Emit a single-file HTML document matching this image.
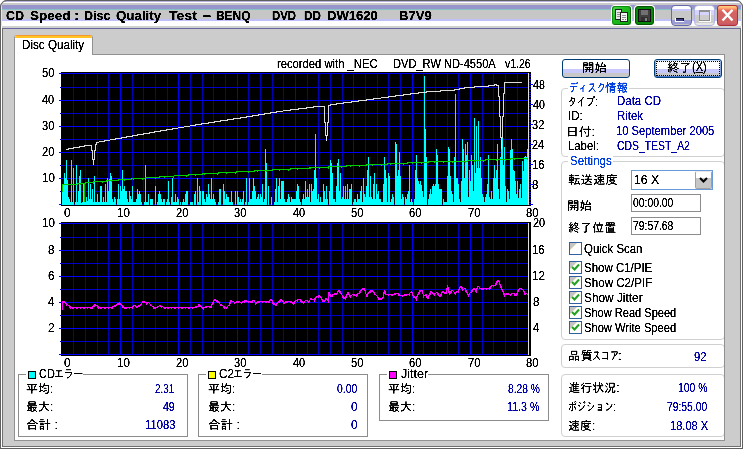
<!DOCTYPE html>
<html lang="ja"><head><meta charset="utf-8"><title>CD Speed : Disc Quality Test</title>
<style>
html,body{margin:0;padding:0;background:#fff;}
body{width:743px;height:449px;overflow:hidden;position:relative;font-family:'Liberation Sans','IPAGothic','Noto Sans CJK JP',sans-serif;font-size:12px;}
#win{position:absolute;left:0;top:0;width:743px;height:449px;background:#cccccc;border-radius:7px 7px 0 0;overflow:hidden;}
#win div,#win span,#win svg{position:absolute;box-sizing:border-box;}
#tb{left:0;top:0;width:743px;height:29px;background:linear-gradient(to bottom,#6a6a6a 0,#6a6a6a 1px,#b4b4dc 1px,#b4b4dc 2px,#fff 2px,#fff 3px,#cacaca 3px,#cacaca 5px,#9696cc 5px,#9696cc 9px,#84c4c4 9px,#84c4c4 10px,#c6c6c6 10px,#c6c6c6 19px,#c0c0f8 19px,#c0c0f8 21px,#fff 21px,#fff 26px,#d0d0d0 26px,#d0d0d0 28px,#6868a0 28px,#6868a0 29px);}
.fr{background:#686868;}
.t{white-space:nowrap;line-height:14px;height:14px;transform-origin:0 50%;color:#000;}
.b{font-weight:bold;}
#panel{left:14px;top:54px;width:711px;height:387px;background:#fff;border:1px solid #919191;}
#tab{left:14px;top:35px;width:79px;height:20px;background:#fff;border-left:1px solid #919191;border-right:1px solid #919191;border-radius:3px 3px 0 0;overflow:hidden;}
#tab i{position:absolute;left:-1px;top:0;width:79px;height:3px;background:linear-gradient(to bottom,#f8982c 0,#f8982c 1px,#ffc423 1px,#ffc423 3px);}
.gb{border:1px solid #8c8c8c;}
.gr{border:1px solid #d0d0d0;border-radius:4px;}
.cap{background:#fff;}
.sw{border:1px solid #000;width:8px;height:8px;}
.btn{border:1px solid #003c74;border-radius:3px;background:linear-gradient(to bottom,#fff 0,#fff 9px,#c8c8fc 9px,#c8c8fc 13px,#c8c8c8 13px,#c8c8c8 17px);}
.inp{border:1px solid #8c8c8c;background:#fff;}
.cb{width:13px;height:13px;border:1px solid #3060a0;background:linear-gradient(135deg,#c4c4c4 0,#c4c4c4 30%,#ffffc8 33%,#fff 38%);}
.cb svg{left:0;top:0;}
#edge{left:0;top:0;width:743px;height:449px;border:1px solid #606060;border-bottom:0;border-radius:7px 7px 0 0;}
#win span.w{position:relative;display:inline-block;white-space:pre;transform-origin:0 50%;line-height:14px;height:14px;vertical-align:top;}

</style></head>
<body>
<div id="win">
<div id="tb"></div>
<!-- frame -->
<div class="fr" style="left:0;top:0;width:1px;height:449px;background:#606060"></div>
<div class="fr" style="left:1px;top:4px;width:1px;height:22px;background:#e4e4e4"></div>
<div class="fr" style="left:741px;top:4px;width:1px;height:22px;background:#e4e4e4"></div>
<div class="fr" style="left:1px;top:26px;width:1px;height:422px;background:#fff"></div>
<div class="fr" style="left:2px;top:28px;width:1px;height:419px;background:#707070"></div>
<div class="fr" style="left:742px;top:0;width:1px;height:449px;background:#606060"></div>
<div class="fr" style="left:741px;top:26px;width:1px;height:422px;background:#fff"></div>
<div class="fr" style="left:740px;top:28px;width:1px;height:419px;background:#707070"></div>
<div class="fr" style="left:2px;top:446px;width:739px;height:1px;background:#707070"></div>
<div class="fr" style="left:1px;top:447px;width:741px;height:1px;background:#fff"></div>
<div class="fr" style="left:0;top:448px;width:743px;height:1px;background:#606060"></div>

<div id="edge"></div>
<!-- title buttons -->
<div id="g1" style="left:612px;top:6px;width:19px;height:19px;border-radius:3px;background:linear-gradient(135deg,#58d058 0,#20bc20 35%,#10a810 100%);border:1px solid #0a900a;border-bottom-color:#067006;border-right-color:#067006;box-shadow:0 0 0 1px #fff;">
<svg width="17" height="17" viewBox="0 0 17 17" shape-rendering="crispEdges"><rect x="2.5" y="2.5" width="6" height="10" fill="#e8e8e8" stroke="#202020"/><rect x="4" y="5" width="3" height="1" fill="#909090"/><rect x="4" y="7" width="3" height="1" fill="#909090"/><rect x="4" y="9" width="3" height="1" fill="#909090"/><rect x="7.5" y="5.5" width="7" height="9" fill="#f4f4f4" stroke="#202020"/><rect x="9" y="8" width="4" height="1" fill="#909090"/><rect x="9" y="10" width="4" height="1" fill="#909090"/><rect x="9" y="12" width="2" height="1" fill="#909090"/><rect x="12" y="12" width="1" height="1" fill="#b040b0"/></svg>
</div>
<div id="g2" style="left:635px;top:6px;width:19px;height:19px;border-radius:3px;background:#088808;border:1px solid #045404;box-shadow:0 0 0 1px #fff;">
<svg width="17" height="17" viewBox="0 0 17 17" shape-rendering="crispEdges"><rect x="2.5" y="2.5" width="12" height="12" fill="#404040" stroke="#101010"/><rect x="5" y="3" width="7" height="5" fill="#707070"/><rect x="5" y="10" width="7" height="4" fill="#303030"/><rect x="9" y="11" width="2" height="3" fill="#808080"/></svg>
</div>
<div id="bmin" style="left:671px;top:5px;width:21px;height:21px;border-radius:4px;border:1px solid #6868b0;background:linear-gradient(to bottom,#fff 0,#fff 3px,#c8c8fc 3px,#c8c8fc 5px,#c8c8c8 5px,#c8c8c8 14px,#9c9cd4 14px,#9c9cd4 18px,#c0c0c0 18px);">
<div style="left:3px;top:12px;width:9px;height:4px;background:#fff"></div>
<div style="left:4px;top:12px;width:8px;height:3px;background:#404088;border-top:1px solid #101020;border-right:1px solid #101020"></div>
</div>
<div id="bmax" style="left:694px;top:5px;width:21px;height:21px;border-radius:4px;border:1px solid #b4b4e4;background:linear-gradient(to bottom,#fff 0,#fff 4px,#d4d4fc 4px,#d4d4fc 9px,#cccccc 9px,#cccccc 17px,#e8e8e8 17px);">
<div style="left:4px;top:5px;width:12px;height:11px;border:1px solid #fff;"></div>
<div style="left:4px;top:4px;width:11px;height:11px;border:1px solid #909090;border-top-width:2px;"></div>
</div>
<div id="bcls" style="left:717px;top:5px;width:21px;height:21px;border-radius:3px;border:1px solid #b03030;background:linear-gradient(to bottom,#ffd080 0,#ffb070 2px,#f07060 4px,#d46464 6px,#d06060 17px,#c05070 19px);">
<svg width="19" height="19" viewBox="0 0 19 19"><path d="M5.3 4.6 L13.7 13.6 M13.7 4.6 L5.3 13.6" stroke="#fff" stroke-width="2.3" stroke-linecap="square"/></svg>
</div>

<!-- tab control -->
<div id="panel"></div>
<div id="tab"><i></i></div>

<!-- bottom group boxes -->
<div class="gb" style="left:18px;top:374px;width:170px;height:63px"></div>
<div class="cap" style="left:26px;top:370px;width:57px;height:10px"></div>
<div class="sw" style="left:28px;top:371px;background:#00ffff"></div>
<div class="gb" style="left:198px;top:374px;width:170px;height:63px"></div>
<div class="cap" style="left:206px;top:370px;width:56px;height:10px"></div>
<div class="sw" style="left:208px;top:371px;background:#ffff00"></div>
<div class="gb" style="left:379px;top:374px;width:170px;height:47px"></div>
<div class="cap" style="left:387px;top:370px;width:41px;height:10px"></div>
<div class="sw" style="left:389px;top:371px;background:#ff00ff"></div>

<!-- right column -->
<div class="btn" style="left:562px;top:59px;width:68px;height:19px"></div>
<div class="btn" style="left:654px;top:59px;width:68px;height:19px;box-shadow:inset 0 -1px 0 #4878d0,inset 0 1px 0 #c4d8f8,inset 1px 0 0 #88a8e0,inset -1px 0 0 #88a8e0"><div style="left:1px;top:1px;width:64px;height:15px;border:1px dotted #000"></div></div>
<div class="gr" style="left:561px;top:88px;width:164px;height:69px"></div>
<div class="cap" style="left:568px;top:83px;width:61px;height:10px"></div>
<div class="gr" style="left:561px;top:161px;width:164px;height:179px"></div>
<div class="cap" style="left:568px;top:156px;width:45px;height:10px"></div>
<div class="gr" style="left:561px;top:344px;width:164px;height:24px"></div>
<div class="gr" style="left:561px;top:374px;width:164px;height:63px"></div>
<div style="left:724px;top:54px;width:1px;height:387px;background:#919191"></div>

<div class="inp" style="left:631px;top:170px;width:82px;height:20px;border-color:#6a9ad8"></div>
<div style="left:695px;top:171px;width:17px;height:18px;border:1px solid #a0a0a0;border-top-color:#e8e8e8;border-radius:2px;background:linear-gradient(to bottom,#fff 0,#fff 6px,#c6c6c6 6px)">
<svg width="15" height="16" viewBox="0 0 15 16"><path d="M4 6 L7.5 9.5 L11 6" fill="none" stroke="#000" stroke-width="2"/></svg>
</div>
<div class="inp" style="left:631px;top:194px;width:70px;height:18px"></div>
<div class="inp" style="left:631px;top:217px;width:70px;height:18px"></div>

<div class="cb" style="left:569px;top:242px"></div>
<div class="cb" style="left:569px;top:261px"><svg width="11" height="11" viewBox="0 0 11 11"><path d="M2 5 L4.5 7.5 L9 2.5" fill="none" stroke="#21a121" stroke-width="2"/></svg></div>
<div class="cb" style="left:569px;top:276px"><svg width="11" height="11" viewBox="0 0 11 11"><path d="M2 5 L4.5 7.5 L9 2.5" fill="none" stroke="#21a121" stroke-width="2"/></svg></div>
<div class="cb" style="left:569px;top:291px"><svg width="11" height="11" viewBox="0 0 11 11"><path d="M2 5 L4.5 7.5 L9 2.5" fill="none" stroke="#21a121" stroke-width="2"/></svg></div>
<div class="cb" style="left:569px;top:306px"><svg width="11" height="11" viewBox="0 0 11 11"><path d="M2 5 L4.5 7.5 L9 2.5" fill="none" stroke="#21a121" stroke-width="2"/></svg></div>
<div class="cb" style="left:569px;top:321px"><svg width="11" height="11" viewBox="0 0 11 11"><path d="M2 5 L4.5 7.5 L9 2.5" fill="none" stroke="#21a121" stroke-width="2"/></svg></div>

<svg id="charts" width="743" height="449" viewBox="0 0 743 449" shape-rendering="crispEdges" style="position:absolute;left:0;top:0">
<rect x="61" y="72" width="470" height="134" fill="#000"/>
<rect x="73" y="73" width="1" height="132" fill="#0000b4"/>
<rect x="85" y="73" width="1" height="132" fill="#0000b4"/>
<rect x="97" y="73" width="1" height="132" fill="#0000b4"/>
<rect x="108" y="73" width="1" height="132" fill="#0000b4"/>
<rect x="120" y="73" width="1" height="132" fill="#0000f0"/>
<rect x="132" y="73" width="1" height="132" fill="#0000b4"/>
<rect x="143" y="73" width="1" height="132" fill="#0000b4"/>
<rect x="155" y="73" width="1" height="132" fill="#0000b4"/>
<rect x="167" y="73" width="1" height="132" fill="#0000b4"/>
<rect x="178" y="73" width="1" height="132" fill="#0000f0"/>
<rect x="190" y="73" width="1" height="132" fill="#0000b4"/>
<rect x="202" y="73" width="1" height="132" fill="#0000b4"/>
<rect x="213" y="73" width="1" height="132" fill="#0000b4"/>
<rect x="225" y="73" width="1" height="132" fill="#0000b4"/>
<rect x="237" y="73" width="1" height="132" fill="#0000f0"/>
<rect x="248" y="73" width="1" height="132" fill="#0000b4"/>
<rect x="260" y="73" width="1" height="132" fill="#0000b4"/>
<rect x="272" y="73" width="1" height="132" fill="#0000b4"/>
<rect x="283" y="73" width="1" height="132" fill="#0000b4"/>
<rect x="295" y="73" width="1" height="132" fill="#0000f0"/>
<rect x="307" y="73" width="1" height="132" fill="#0000b4"/>
<rect x="318" y="73" width="1" height="132" fill="#0000b4"/>
<rect x="330" y="73" width="1" height="132" fill="#0000b4"/>
<rect x="342" y="73" width="1" height="132" fill="#0000b4"/>
<rect x="353" y="73" width="1" height="132" fill="#0000f0"/>
<rect x="365" y="73" width="1" height="132" fill="#0000b4"/>
<rect x="377" y="73" width="1" height="132" fill="#0000b4"/>
<rect x="388" y="73" width="1" height="132" fill="#0000b4"/>
<rect x="400" y="73" width="1" height="132" fill="#0000b4"/>
<rect x="412" y="73" width="1" height="132" fill="#0000f0"/>
<rect x="423" y="73" width="1" height="132" fill="#0000b4"/>
<rect x="435" y="73" width="1" height="132" fill="#0000b4"/>
<rect x="447" y="73" width="1" height="132" fill="#0000b4"/>
<rect x="458" y="73" width="1" height="132" fill="#0000b4"/>
<rect x="470" y="73" width="1" height="132" fill="#0000f0"/>
<rect x="482" y="73" width="1" height="132" fill="#0000b4"/>
<rect x="493" y="73" width="1" height="132" fill="#0000b4"/>
<rect x="505" y="73" width="1" height="132" fill="#0000b4"/>
<rect x="517" y="73" width="1" height="132" fill="#0000b4"/>
<rect x="59" y="73" width="469" height="1" fill="#0000ff"/>
<rect x="60" y="87" width="468" height="1" fill="#0000c8"/>
<rect x="59" y="100" width="469" height="1" fill="#0000ff"/>
<rect x="60" y="113" width="468" height="1" fill="#0000c8"/>
<rect x="59" y="126" width="469" height="1" fill="#0000ff"/>
<rect x="60" y="139" width="468" height="1" fill="#0000c8"/>
<rect x="59" y="152" width="469" height="1" fill="#0000ff"/>
<rect x="60" y="165" width="468" height="1" fill="#0000c8"/>
<rect x="59" y="178" width="469" height="1" fill="#0000ff"/>
<rect x="60" y="191" width="468" height="1" fill="#0000c8"/>
<rect x="59" y="204" width="469" height="1" fill="#0000ff"/>
<rect x="61" y="222" width="470" height="134" fill="#000"/>
<rect x="73" y="223" width="1" height="132" fill="#0000b4"/>
<rect x="85" y="223" width="1" height="132" fill="#0000b4"/>
<rect x="97" y="223" width="1" height="132" fill="#0000b4"/>
<rect x="108" y="223" width="1" height="132" fill="#0000b4"/>
<rect x="120" y="223" width="1" height="132" fill="#0000f0"/>
<rect x="132" y="223" width="1" height="132" fill="#0000b4"/>
<rect x="143" y="223" width="1" height="132" fill="#0000b4"/>
<rect x="155" y="223" width="1" height="132" fill="#0000b4"/>
<rect x="167" y="223" width="1" height="132" fill="#0000b4"/>
<rect x="178" y="223" width="1" height="132" fill="#0000f0"/>
<rect x="190" y="223" width="1" height="132" fill="#0000b4"/>
<rect x="202" y="223" width="1" height="132" fill="#0000b4"/>
<rect x="213" y="223" width="1" height="132" fill="#0000b4"/>
<rect x="225" y="223" width="1" height="132" fill="#0000b4"/>
<rect x="237" y="223" width="1" height="132" fill="#0000f0"/>
<rect x="248" y="223" width="1" height="132" fill="#0000b4"/>
<rect x="260" y="223" width="1" height="132" fill="#0000b4"/>
<rect x="272" y="223" width="1" height="132" fill="#0000b4"/>
<rect x="283" y="223" width="1" height="132" fill="#0000b4"/>
<rect x="295" y="223" width="1" height="132" fill="#0000f0"/>
<rect x="307" y="223" width="1" height="132" fill="#0000b4"/>
<rect x="318" y="223" width="1" height="132" fill="#0000b4"/>
<rect x="330" y="223" width="1" height="132" fill="#0000b4"/>
<rect x="342" y="223" width="1" height="132" fill="#0000b4"/>
<rect x="353" y="223" width="1" height="132" fill="#0000f0"/>
<rect x="365" y="223" width="1" height="132" fill="#0000b4"/>
<rect x="377" y="223" width="1" height="132" fill="#0000b4"/>
<rect x="388" y="223" width="1" height="132" fill="#0000b4"/>
<rect x="400" y="223" width="1" height="132" fill="#0000b4"/>
<rect x="412" y="223" width="1" height="132" fill="#0000f0"/>
<rect x="423" y="223" width="1" height="132" fill="#0000b4"/>
<rect x="435" y="223" width="1" height="132" fill="#0000b4"/>
<rect x="447" y="223" width="1" height="132" fill="#0000b4"/>
<rect x="458" y="223" width="1" height="132" fill="#0000b4"/>
<rect x="470" y="223" width="1" height="132" fill="#0000f0"/>
<rect x="482" y="223" width="1" height="132" fill="#0000b4"/>
<rect x="493" y="223" width="1" height="132" fill="#0000b4"/>
<rect x="505" y="223" width="1" height="132" fill="#0000b4"/>
<rect x="517" y="223" width="1" height="132" fill="#0000b4"/>
<rect x="59" y="223" width="469" height="1" fill="#0000ff"/>
<rect x="60" y="237" width="468" height="1" fill="#0000c8"/>
<rect x="59" y="250" width="469" height="1" fill="#0000ff"/>
<rect x="60" y="263" width="468" height="1" fill="#0000c8"/>
<rect x="59" y="276" width="469" height="1" fill="#0000ff"/>
<rect x="60" y="289" width="468" height="1" fill="#0000c8"/>
<rect x="59" y="302" width="469" height="1" fill="#0000ff"/>
<rect x="60" y="315" width="468" height="1" fill="#0000c8"/>
<rect x="59" y="328" width="469" height="1" fill="#0000ff"/>
<rect x="60" y="341" width="468" height="1" fill="#0000c8"/>
<rect x="59" y="354" width="469" height="1" fill="#0000ff"/>
<rect x="529" y="204" width="2" height="1" fill="#0000ff"/>
<rect x="529" y="202" width="2" height="1" fill="#0000ff"/>
<rect x="529" y="199" width="2" height="1" fill="#0000ff"/>
<rect x="529" y="196" width="2" height="1" fill="#0000ff"/>
<rect x="529" y="194" width="2" height="1" fill="#0000ff"/>
<rect x="529" y="192" width="2" height="1" fill="#0000ff"/>
<rect x="529" y="189" width="2" height="1" fill="#0000ff"/>
<rect x="529" y="186" width="2" height="1" fill="#0000ff"/>
<rect x="529" y="184" width="4" height="1" fill="#0000ff"/>
<rect x="529" y="182" width="2" height="1" fill="#0000ff"/>
<rect x="529" y="179" width="2" height="1" fill="#0000ff"/>
<rect x="529" y="176" width="2" height="1" fill="#0000ff"/>
<rect x="529" y="174" width="2" height="1" fill="#0000ff"/>
<rect x="529" y="172" width="2" height="1" fill="#0000ff"/>
<rect x="529" y="169" width="2" height="1" fill="#0000ff"/>
<rect x="529" y="166" width="2" height="1" fill="#0000ff"/>
<rect x="529" y="164" width="4" height="1" fill="#0000ff"/>
<rect x="529" y="162" width="2" height="1" fill="#0000ff"/>
<rect x="529" y="159" width="2" height="1" fill="#0000ff"/>
<rect x="529" y="156" width="2" height="1" fill="#0000ff"/>
<rect x="529" y="154" width="2" height="1" fill="#0000ff"/>
<rect x="529" y="152" width="2" height="1" fill="#0000ff"/>
<rect x="529" y="149" width="2" height="1" fill="#0000ff"/>
<rect x="529" y="146" width="2" height="1" fill="#0000ff"/>
<rect x="529" y="144" width="4" height="1" fill="#0000ff"/>
<rect x="529" y="142" width="2" height="1" fill="#0000ff"/>
<rect x="529" y="139" width="2" height="1" fill="#0000ff"/>
<rect x="529" y="136" width="2" height="1" fill="#0000ff"/>
<rect x="529" y="134" width="2" height="1" fill="#0000ff"/>
<rect x="529" y="132" width="2" height="1" fill="#0000ff"/>
<rect x="529" y="129" width="2" height="1" fill="#0000ff"/>
<rect x="529" y="126" width="2" height="1" fill="#0000ff"/>
<rect x="529" y="124" width="4" height="1" fill="#0000ff"/>
<rect x="529" y="122" width="2" height="1" fill="#0000ff"/>
<rect x="529" y="119" width="2" height="1" fill="#0000ff"/>
<rect x="529" y="116" width="2" height="1" fill="#0000ff"/>
<rect x="529" y="114" width="2" height="1" fill="#0000ff"/>
<rect x="529" y="112" width="2" height="1" fill="#0000ff"/>
<rect x="529" y="109" width="2" height="1" fill="#0000ff"/>
<rect x="529" y="106" width="2" height="1" fill="#0000ff"/>
<rect x="529" y="104" width="4" height="1" fill="#0000ff"/>
<rect x="529" y="102" width="2" height="1" fill="#0000ff"/>
<rect x="529" y="99" width="2" height="1" fill="#0000ff"/>
<rect x="529" y="96" width="2" height="1" fill="#0000ff"/>
<rect x="529" y="94" width="2" height="1" fill="#0000ff"/>
<rect x="529" y="92" width="2" height="1" fill="#0000ff"/>
<rect x="529" y="89" width="2" height="1" fill="#0000ff"/>
<rect x="529" y="86" width="2" height="1" fill="#0000ff"/>
<rect x="529" y="84" width="4" height="1" fill="#0000ff"/>
<rect x="529" y="82" width="2" height="1" fill="#0000ff"/>
<rect x="529" y="79" width="2" height="1" fill="#0000ff"/>
<rect x="529" y="76" width="2" height="1" fill="#0000ff"/>
<rect x="529" y="74" width="2" height="1" fill="#0000ff"/>
<rect x="529" y="204" width="4" height="1" fill="#0000ff"/>
<path d="M62 185h1v20h-1zM63 185h1v20h-1zM64 173h1v32h-1zM65 178h1v27h-1zM66 160h1v45h-1zM67 180h1v25h-1zM68 197h1v8h-1zM69 199h1v6h-1zM70 202h1v3h-1zM71 160h1v45h-1zM72 202h1v3h-1zM73 168h1v37h-1zM75 202h1v3h-1zM76 165h1v40h-1zM77 202h1v3h-1zM78 191h1v14h-1zM79 176h1v29h-1zM80 170h1v35h-1zM81 203h1v2h-1zM82 202h1v3h-1zM83 184h1v21h-1zM84 201h1v4h-1zM85 202h1v3h-1zM86 197h1v8h-1zM87 201h1v4h-1zM88 178h1v27h-1zM89 199h1v6h-1zM90 184h1v21h-1zM91 199h1v6h-1zM92 189h1v16h-1zM93 202h1v3h-1zM94 176h1v29h-1zM95 202h1v3h-1zM96 202h1v3h-1zM97 194h1v11h-1zM98 202h1v3h-1zM99 202h1v3h-1zM100 186h1v19h-1zM101 186h1v19h-1zM102 202h1v3h-1zM103 197h1v8h-1zM104 202h1v3h-1zM105 184h1v21h-1zM106 202h1v3h-1zM107 178h1v27h-1zM108 191h1v14h-1zM109 179h1v26h-1zM110 173h1v32h-1zM111 176h1v29h-1zM112 199h1v6h-1zM113 202h1v3h-1zM114 197h1v8h-1zM115 199h1v6h-1zM117 199h1v6h-1zM118 184h1v21h-1zM119 199h1v6h-1zM120 186h1v19h-1zM121 191h1v14h-1zM122 170h1v35h-1zM123 189h1v16h-1zM124 186h1v19h-1zM125 191h1v14h-1zM126 191h1v14h-1zM127 199h1v6h-1zM128 202h1v3h-1zM129 191h1v14h-1zM130 196h1v9h-1zM131 199h1v6h-1zM132 186h1v19h-1zM133 202h1v3h-1zM134 202h1v3h-1zM135 202h1v3h-1zM136 199h1v6h-1zM137 189h1v16h-1zM138 194h1v11h-1zM139 191h1v14h-1zM140 194h1v11h-1zM141 202h1v3h-1zM144 202h1v3h-1zM145 165h1v40h-1zM146 202h1v3h-1zM147 202h1v3h-1zM148 194h1v11h-1zM150 199h1v6h-1zM151 199h1v6h-1zM152 199h1v6h-1zM155 186h1v19h-1zM157 202h1v3h-1zM158 194h1v11h-1zM159 191h1v14h-1zM160 194h1v11h-1zM161 199h1v6h-1zM162 202h1v3h-1zM163 199h1v6h-1zM164 199h1v6h-1zM166 202h1v3h-1zM167 199h1v6h-1zM168 181h1v24h-1zM169 202h1v3h-1zM171 197h1v8h-1zM172 178h1v27h-1zM173 202h1v3h-1zM174 202h1v3h-1zM175 194h1v11h-1zM176 202h1v3h-1zM177 197h1v8h-1zM178 199h1v6h-1zM180 202h1v3h-1zM182 202h1v3h-1zM183 199h1v6h-1zM184 202h1v3h-1zM185 194h1v11h-1zM186 191h1v14h-1zM187 191h1v14h-1zM190 202h1v3h-1zM191 202h1v3h-1zM192 202h1v3h-1zM194 194h1v11h-1zM195 191h1v14h-1zM197 178h1v27h-1zM198 202h1v3h-1zM199 186h1v19h-1zM200 191h1v14h-1zM202 191h1v14h-1zM203 191h1v14h-1zM204 199h1v6h-1zM205 202h1v3h-1zM206 194h1v11h-1zM207 197h1v8h-1zM208 184h1v21h-1zM209 194h1v11h-1zM210 199h1v6h-1zM211 178h1v27h-1zM212 199h1v6h-1zM213 194h1v11h-1zM214 199h1v6h-1zM215 202h1v3h-1zM218 202h1v3h-1zM219 189h1v16h-1zM220 189h1v16h-1zM223 184h1v21h-1zM224 191h1v14h-1zM225 199h1v6h-1zM226 194h1v11h-1zM227 197h1v8h-1zM228 197h1v8h-1zM229 202h1v3h-1zM230 202h1v3h-1zM231 191h1v14h-1zM232 202h1v3h-1zM235 191h1v14h-1zM237 191h1v14h-1zM238 197h1v8h-1zM239 202h1v3h-1zM240 199h1v6h-1zM241 202h1v3h-1zM242 199h1v6h-1zM243 191h1v14h-1zM245 202h1v3h-1zM246 178h1v27h-1zM248 202h1v3h-1zM249 178h1v27h-1zM250 199h1v6h-1zM251 199h1v6h-1zM252 191h1v14h-1zM253 178h1v27h-1zM254 186h1v19h-1zM255 191h1v14h-1zM256 199h1v6h-1zM257 197h1v8h-1zM258 194h1v11h-1zM259 199h1v6h-1zM260 194h1v11h-1zM261 197h1v8h-1zM262 184h1v21h-1zM263 202h1v3h-1zM264 199h1v6h-1zM265 149h1v56h-1zM266 163h1v42h-1zM268 186h1v19h-1zM271 197h1v8h-1zM274 202h1v3h-1zM275 189h1v16h-1zM276 178h1v27h-1zM277 202h1v3h-1zM278 186h1v19h-1zM279 178h1v27h-1zM280 199h1v6h-1zM281 181h1v24h-1zM282 181h1v24h-1zM283 181h1v24h-1zM284 199h1v6h-1zM285 202h1v3h-1zM286 202h1v3h-1zM287 199h1v6h-1zM288 194h1v11h-1zM289 197h1v8h-1zM290 202h1v3h-1zM291 197h1v8h-1zM292 199h1v6h-1zM293 199h1v6h-1zM294 199h1v6h-1zM295 199h1v6h-1zM296 191h1v14h-1zM297 184h1v21h-1zM298 186h1v19h-1zM299 199h1v6h-1zM300 202h1v3h-1zM302 199h1v6h-1zM303 194h1v11h-1zM304 199h1v6h-1zM305 181h1v24h-1zM306 197h1v8h-1zM307 189h1v16h-1zM308 197h1v8h-1zM309 184h1v21h-1zM310 202h1v3h-1zM311 184h1v21h-1zM312 191h1v14h-1zM313 189h1v16h-1zM314 170h1v35h-1zM315 134h1v71h-1zM316 178h1v27h-1zM317 199h1v6h-1zM318 194h1v11h-1zM319 202h1v3h-1zM320 197h1v8h-1zM321 202h1v3h-1zM322 202h1v3h-1zM323 184h1v21h-1zM324 191h1v14h-1zM325 199h1v6h-1zM326 186h1v19h-1zM327 199h1v6h-1zM329 191h1v14h-1zM330 160h1v45h-1zM331 163h1v42h-1zM332 173h1v32h-1zM333 199h1v6h-1zM334 199h1v6h-1zM335 202h1v3h-1zM336 186h1v19h-1zM337 163h1v42h-1zM338 159h1v46h-1zM339 191h1v14h-1zM340 173h1v32h-1zM341 199h1v6h-1zM342 197h1v8h-1zM343 186h1v19h-1zM344 199h1v6h-1zM345 186h1v19h-1zM346 199h1v6h-1zM347 184h1v21h-1zM348 199h1v6h-1zM349 189h1v16h-1zM350 189h1v16h-1zM351 184h1v21h-1zM353 202h1v3h-1zM354 199h1v6h-1zM355 199h1v6h-1zM356 202h1v3h-1zM357 194h1v11h-1zM358 199h1v6h-1zM359 199h1v6h-1zM360 191h1v14h-1zM361 186h1v19h-1zM362 202h1v3h-1zM363 178h1v27h-1zM364 194h1v11h-1zM365 197h1v8h-1zM366 186h1v19h-1zM367 170h1v35h-1zM368 157h1v48h-1zM369 197h1v8h-1zM370 176h1v29h-1zM371 197h1v8h-1zM372 199h1v6h-1zM373 184h1v21h-1zM374 173h1v32h-1zM375 199h1v6h-1zM376 184h1v21h-1zM377 194h1v11h-1zM378 191h1v14h-1zM379 199h1v6h-1zM380 199h1v6h-1zM381 202h1v3h-1zM382 202h1v3h-1zM383 184h1v21h-1zM384 157h1v48h-1zM385 170h1v35h-1zM386 178h1v27h-1zM387 202h1v3h-1zM388 173h1v32h-1zM389 176h1v29h-1zM390 202h1v3h-1zM391 199h1v6h-1zM392 194h1v11h-1zM393 197h1v8h-1zM395 142h1v63h-1zM396 144h1v61h-1zM397 176h1v29h-1zM398 170h1v35h-1zM399 152h1v53h-1zM400 176h1v29h-1zM401 199h1v6h-1zM402 194h1v11h-1zM403 197h1v8h-1zM405 197h1v8h-1zM406 199h1v6h-1zM407 194h1v11h-1zM408 191h1v14h-1zM409 165h1v40h-1zM410 202h1v3h-1zM411 199h1v6h-1zM412 202h1v3h-1zM414 199h1v6h-1zM415 170h1v35h-1zM416 155h1v50h-1zM417 178h1v27h-1zM418 181h1v24h-1zM419 184h1v21h-1zM420 181h1v24h-1zM421 185h1v20h-1zM422 191h1v14h-1zM423 197h1v8h-1zM424 76h1v129h-1zM425 129h1v76h-1zM426 157h1v48h-1zM428 199h1v6h-1zM429 194h1v11h-1zM430 189h1v16h-1zM431 194h1v11h-1zM432 186h1v19h-1zM433 184h1v21h-1zM434 186h1v19h-1zM435 184h1v21h-1zM436 149h1v56h-1zM437 155h1v50h-1zM438 184h1v21h-1zM439 189h1v16h-1zM440 189h1v16h-1zM441 189h1v16h-1zM443 199h1v6h-1zM444 202h1v3h-1zM445 202h1v3h-1zM446 202h1v3h-1zM447 176h1v29h-1zM448 147h1v58h-1zM449 149h1v56h-1zM450 176h1v29h-1zM451 191h1v14h-1zM452 194h1v11h-1zM453 202h1v3h-1zM454 157h1v48h-1zM455 94h1v111h-1zM456 178h1v27h-1zM457 178h1v27h-1zM458 184h1v21h-1zM459 199h1v6h-1zM460 202h1v3h-1zM461 181h1v24h-1zM462 139h1v66h-1zM463 149h1v56h-1zM464 178h1v27h-1zM465 144h1v61h-1zM466 155h1v50h-1zM467 142h1v63h-1zM468 197h1v8h-1zM469 170h1v35h-1zM470 181h1v24h-1zM471 155h1v50h-1zM472 165h1v40h-1zM473 191h1v14h-1zM474 118h1v87h-1zM475 173h1v32h-1zM476 126h1v79h-1zM477 168h1v37h-1zM478 121h1v84h-1zM479 168h1v37h-1zM480 157h1v48h-1zM481 178h1v27h-1zM482 194h1v11h-1zM483 197h1v8h-1zM484 202h1v3h-1zM485 197h1v8h-1zM486 194h1v11h-1zM487 184h1v21h-1zM488 155h1v50h-1zM489 197h1v8h-1zM490 199h1v6h-1zM491 191h1v14h-1zM492 199h1v6h-1zM493 178h1v27h-1zM494 165h1v40h-1zM495 178h1v27h-1zM496 170h1v35h-1zM497 144h1v61h-1zM498 189h1v16h-1zM499 199h1v6h-1zM500 157h1v48h-1zM501 148h1v57h-1zM502 137h1v68h-1zM503 165h1v40h-1zM504 147h1v58h-1zM505 186h1v19h-1zM506 202h1v3h-1zM507 189h1v16h-1zM508 191h1v14h-1zM509 199h1v6h-1zM510 150h1v55h-1zM511 139h1v66h-1zM512 149h1v56h-1zM513 170h1v35h-1zM514 171h1v34h-1zM515 181h1v24h-1zM516 194h1v11h-1zM517 181h1v24h-1zM518 198h1v7h-1zM519 189h1v16h-1zM520 184h1v21h-1zM521 198h1v7h-1zM522 161h1v44h-1zM523 171h1v34h-1zM524 157h1v48h-1zM525 156h1v49h-1zM526 157h1v48h-1zM527 149h1v56h-1z" fill="#00ffff"/>
<path d="M62 184h1v8h-1zM63 184h1v1h-1zM64 184h1v1h-1zM65 184h1v1h-1zM66 184h1v1h-1zM67 184h1v1h-1zM68 184h1v1h-1zM69 184h1v1h-1zM70 184h1v1h-1zM71 184h1v2h-1zM72 184h1v1h-1zM73 184h1v1h-1zM74 184h1v1h-1zM75 184h1v1h-1zM76 184h1v1h-1zM77 183h1v2h-1zM78 183h1v1h-1zM79 183h1v1h-1zM80 183h1v2h-1zM81 183h1v1h-1zM82 183h1v1h-1zM83 183h1v1h-1zM84 183h1v1h-1zM85 182h1v2h-1zM86 182h1v1h-1zM87 182h1v1h-1zM88 182h1v1h-1zM89 182h1v1h-1zM90 182h1v1h-1zM91 182h1v1h-1zM92 182h1v1h-1zM93 181h1v3h-1zM94 181h1v1h-1zM95 181h1v1h-1zM96 181h1v1h-1zM97 181h1v1h-1zM98 181h1v1h-1zM99 181h1v1h-1zM100 181h1v1h-1zM101 181h1v1h-1zM102 181h1v2h-1zM103 181h1v1h-1zM104 181h1v1h-1zM105 181h1v1h-1zM106 180h1v2h-1zM107 180h1v1h-1zM108 180h1v1h-1zM109 180h1v1h-1zM110 180h1v1h-1zM111 180h1v2h-1zM112 180h1v1h-1zM113 180h1v1h-1zM114 180h1v1h-1zM115 180h1v1h-1zM116 180h1v1h-1zM117 180h1v1h-1zM118 179h1v2h-1zM119 179h1v1h-1zM120 179h1v1h-1zM121 179h1v1h-1zM122 179h1v1h-1zM123 179h1v1h-1zM124 179h1v2h-1zM125 179h1v1h-1zM126 179h1v1h-1zM127 179h1v1h-1zM128 179h1v1h-1zM129 179h1v1h-1zM130 179h1v1h-1zM131 178h1v2h-1zM132 178h1v1h-1zM133 178h1v2h-1zM134 178h1v1h-1zM135 178h1v1h-1zM136 178h1v1h-1zM137 178h1v1h-1zM138 178h1v1h-1zM139 178h1v1h-1zM140 178h1v1h-1zM141 178h1v1h-1zM142 178h1v2h-1zM143 178h1v1h-1zM144 178h1v1h-1zM145 177h1v1h-1zM146 177h1v1h-1zM147 177h1v1h-1zM148 177h1v1h-1zM149 177h1v1h-1zM150 177h1v1h-1zM151 177h1v1h-1zM152 177h1v1h-1zM153 177h1v1h-1zM154 177h1v1h-1zM155 177h1v2h-1zM156 177h1v1h-1zM157 177h1v1h-1zM158 177h1v1h-1zM159 176h1v2h-1zM160 176h1v1h-1zM161 176h1v1h-1zM162 176h1v1h-1zM163 176h1v1h-1zM164 176h1v2h-1zM165 176h1v1h-1zM166 176h1v1h-1zM167 176h1v1h-1zM168 176h1v1h-1zM169 176h1v1h-1zM170 176h1v1h-1zM171 176h1v1h-1zM172 176h1v1h-1zM173 176h1v2h-1zM174 175h1v1h-1zM175 175h1v1h-1zM176 175h1v1h-1zM177 175h1v1h-1zM178 175h1v1h-1zM179 175h1v1h-1zM180 175h1v1h-1zM181 175h1v1h-1zM182 175h1v1h-1zM183 175h1v1h-1zM184 175h1v1h-1zM185 175h1v1h-1zM186 175h1v2h-1zM187 175h1v1h-1zM188 174h1v2h-1zM189 174h1v1h-1zM190 174h1v1h-1zM191 174h1v1h-1zM192 174h1v1h-1zM193 174h1v1h-1zM194 174h1v1h-1zM195 174h1v2h-1zM196 174h1v1h-1zM197 174h1v1h-1zM198 174h1v1h-1zM199 174h1v1h-1zM200 174h1v1h-1zM201 174h1v1h-1zM202 173h1v2h-1zM203 173h1v1h-1zM204 173h1v2h-1zM205 173h1v1h-1zM206 173h1v1h-1zM207 173h1v1h-1zM208 173h1v1h-1zM209 173h1v1h-1zM210 173h1v1h-1zM211 173h1v1h-1zM212 173h1v1h-1zM213 173h1v1h-1zM214 173h1v1h-1zM215 173h1v1h-1zM216 173h1v1h-1zM217 173h1v2h-1zM218 172h1v2h-1zM219 172h1v1h-1zM220 172h1v1h-1zM221 172h1v1h-1zM222 172h1v1h-1zM223 172h1v1h-1zM224 172h1v1h-1zM225 172h1v1h-1zM226 172h1v2h-1zM227 172h1v1h-1zM228 172h1v1h-1zM229 172h1v1h-1zM230 172h1v1h-1zM231 172h1v1h-1zM232 172h1v1h-1zM233 172h1v1h-1zM234 172h1v1h-1zM235 172h1v2h-1zM236 171h1v2h-1zM237 171h1v1h-1zM238 171h1v1h-1zM239 171h1v1h-1zM240 171h1v1h-1zM241 171h1v1h-1zM242 171h1v1h-1zM243 171h1v1h-1zM244 171h1v1h-1zM245 171h1v1h-1zM246 171h1v1h-1zM247 171h1v1h-1zM248 171h1v2h-1zM249 171h1v1h-1zM250 171h1v1h-1zM251 171h1v1h-1zM252 171h1v1h-1zM253 171h1v1h-1zM254 170h1v2h-1zM255 170h1v1h-1zM256 170h1v1h-1zM257 170h1v2h-1zM258 170h1v1h-1zM259 170h1v1h-1zM260 170h1v1h-1zM261 170h1v1h-1zM262 170h1v1h-1zM263 170h1v1h-1zM264 170h1v1h-1zM265 170h1v1h-1zM266 170h1v2h-1zM267 170h1v1h-1zM268 170h1v1h-1zM269 170h1v1h-1zM270 170h1v1h-1zM271 170h1v1h-1zM272 169h1v2h-1zM273 169h1v1h-1zM274 169h1v1h-1zM275 169h1v1h-1zM276 169h1v1h-1zM277 169h1v1h-1zM278 169h1v1h-1zM279 169h1v2h-1zM280 169h1v1h-1zM281 169h1v1h-1zM282 169h1v1h-1zM283 169h1v1h-1zM284 169h1v1h-1zM285 169h1v1h-1zM286 169h1v1h-1zM287 169h1v1h-1zM288 169h1v2h-1zM289 169h1v1h-1zM290 168h1v2h-1zM291 168h1v1h-1zM292 168h1v1h-1zM293 168h1v1h-1zM294 168h1v1h-1zM295 168h1v1h-1zM296 168h1v1h-1zM297 168h1v2h-1zM298 168h1v1h-1zM299 168h1v1h-1zM300 168h1v1h-1zM301 168h1v1h-1zM302 168h1v1h-1zM303 168h1v1h-1zM304 168h1v1h-1zM305 168h1v1h-1zM306 168h1v1h-1zM307 168h1v1h-1zM308 168h1v1h-1zM309 167h1v2h-1zM310 167h1v2h-1zM311 167h1v1h-1zM312 167h1v1h-1zM313 167h1v1h-1zM314 167h1v1h-1zM315 167h1v1h-1zM316 167h1v1h-1zM317 167h1v1h-1zM318 167h1v1h-1zM319 167h1v2h-1zM320 167h1v1h-1zM321 167h1v1h-1zM322 167h1v1h-1zM323 167h1v1h-1zM324 167h1v1h-1zM325 167h1v1h-1zM326 167h1v1h-1zM327 167h1v1h-1zM328 166h1v3h-1zM329 166h1v1h-1zM330 166h1v1h-1zM331 166h1v1h-1zM332 166h1v1h-1zM333 166h1v1h-1zM334 166h1v1h-1zM335 166h1v1h-1zM336 166h1v1h-1zM337 166h1v1h-1zM338 166h1v1h-1zM339 166h1v1h-1zM340 166h1v1h-1zM341 166h1v2h-1zM342 166h1v1h-1zM343 166h1v1h-1zM344 166h1v1h-1zM345 166h1v1h-1zM346 165h1v2h-1zM347 165h1v1h-1zM348 165h1v1h-1zM349 165h1v1h-1zM350 165h1v2h-1zM351 165h1v1h-1zM352 165h1v1h-1zM353 165h1v1h-1zM354 165h1v1h-1zM355 165h1v1h-1zM356 165h1v1h-1zM357 165h1v1h-1zM358 165h1v1h-1zM359 165h1v2h-1zM360 165h1v1h-1zM361 165h1v1h-1zM362 165h1v1h-1zM363 165h1v1h-1zM364 165h1v1h-1zM365 165h1v1h-1zM366 164h1v2h-1zM367 164h1v1h-1zM368 164h1v1h-1zM369 164h1v1h-1zM370 164h1v1h-1zM371 164h1v1h-1zM372 164h1v2h-1zM373 164h1v1h-1zM374 164h1v1h-1zM375 164h1v1h-1zM376 164h1v1h-1zM377 164h1v1h-1zM378 164h1v1h-1zM379 164h1v1h-1zM380 164h1v1h-1zM381 164h1v2h-1zM382 164h1v1h-1zM383 164h1v1h-1zM384 164h1v1h-1zM385 164h1v1h-1zM386 164h1v1h-1zM387 163h1v2h-1zM388 163h1v1h-1zM389 163h1v1h-1zM390 163h1v2h-1zM391 163h1v1h-1zM392 163h1v1h-1zM393 163h1v1h-1zM394 163h1v1h-1zM395 163h1v1h-1zM396 163h1v1h-1zM397 163h1v1h-1zM398 163h1v1h-1zM399 163h1v1h-1zM400 163h1v1h-1zM401 163h1v1h-1zM402 163h1v1h-1zM403 163h1v2h-1zM404 163h1v1h-1zM405 163h1v1h-1zM406 163h1v1h-1zM407 162h1v2h-1zM408 162h1v1h-1zM409 162h1v1h-1zM410 162h1v1h-1zM411 162h1v1h-1zM412 162h1v2h-1zM413 162h1v1h-1zM414 162h1v1h-1zM415 162h1v1h-1zM416 162h1v1h-1zM417 162h1v1h-1zM418 162h1v1h-1zM419 162h1v1h-1zM420 162h1v1h-1zM421 162h1v2h-1zM422 162h1v1h-1zM423 162h1v1h-1zM424 162h1v1h-1zM425 162h1v1h-1zM426 162h1v1h-1zM427 162h1v1h-1zM428 161h1v2h-1zM429 161h1v1h-1zM430 161h1v1h-1zM431 161h1v1h-1zM432 161h1v1h-1zM433 161h1v1h-1zM434 161h1v2h-1zM435 161h1v1h-1zM436 161h1v1h-1zM437 161h1v1h-1zM438 161h1v1h-1zM439 161h1v1h-1zM440 161h1v1h-1zM441 161h1v1h-1zM442 161h1v1h-1zM443 161h1v2h-1zM444 161h1v1h-1zM445 161h1v1h-1zM446 161h1v1h-1zM447 161h1v1h-1zM448 161h1v1h-1zM449 161h1v1h-1zM450 161h1v1h-1zM451 161h1v1h-1zM452 161h1v2h-1zM453 161h1v1h-1zM454 161h1v1h-1zM455 161h1v1h-1zM456 161h1v1h-1zM457 161h1v1h-1zM458 161h1v1h-1zM459 161h1v1h-1zM460 161h1v1h-1zM461 161h1v1h-1zM462 161h1v1h-1zM463 161h1v1h-1zM464 161h1v1h-1zM465 161h1v2h-1zM466 161h1v1h-1zM467 160h1v2h-1zM468 160h1v1h-1zM469 160h1v1h-1zM470 160h1v1h-1zM471 160h1v1h-1zM472 160h1v1h-1zM473 160h1v1h-1zM474 160h1v2h-1zM475 160h1v1h-1zM476 160h1v1h-1zM477 160h1v1h-1zM478 160h1v1h-1zM479 160h1v1h-1zM480 160h1v1h-1zM481 160h1v1h-1zM482 160h1v1h-1zM483 160h1v2h-1zM484 160h1v1h-1zM485 159h1v2h-1zM486 159h1v1h-1zM487 159h1v1h-1zM488 159h1v1h-1zM489 159h1v1h-1zM490 159h1v1h-1zM491 159h1v1h-1zM492 159h1v1h-1zM493 159h1v1h-1zM494 159h1v1h-1zM495 159h1v1h-1zM496 159h1v2h-1zM497 159h1v1h-1zM498 159h1v1h-1zM499 159h1v1h-1zM500 159h1v1h-1zM501 159h1v1h-1zM502 159h1v1h-1zM503 159h1v1h-1zM504 159h1v1h-1zM505 159h1v2h-1zM506 159h1v1h-1zM507 159h1v1h-1zM508 159h1v1h-1zM509 159h1v1h-1zM510 158h1v2h-1zM511 158h1v1h-1zM512 158h1v1h-1zM513 158h1v1h-1zM514 158h1v2h-1zM515 158h1v1h-1zM516 158h1v1h-1zM517 158h1v1h-1zM518 158h1v1h-1zM519 158h1v1h-1zM520 158h1v1h-1zM521 158h1v1h-1zM522 158h1v1h-1zM523 158h1v1h-1zM524 158h1v1h-1zM525 158h1v1h-1zM526 158h1v1h-1zM527 158h1v2h-1z" fill="#00d000"/>
<rect x="84" y="183" width="1" height="19" fill="#00d000"/>
<path d="M66 149h1v1h-1zM67 149h1v1h-1zM68 148h1v2h-1zM69 148h1v1h-1zM70 148h1v1h-1zM71 148h1v1h-1zM72 148h1v1h-1zM73 147h1v2h-1zM74 147h1v1h-1zM75 147h1v1h-1zM76 147h1v1h-1zM77 147h1v1h-1zM78 147h1v1h-1zM79 146h1v2h-1zM80 146h1v1h-1zM81 146h1v1h-1zM82 146h1v1h-1zM83 146h1v1h-1zM84 145h1v2h-1zM85 145h1v1h-1zM86 145h1v1h-1zM87 145h1v1h-1zM88 145h1v1h-1zM89 145h1v1h-1zM90 145h1v1h-1zM91 145h1v6h-1zM92 150h1v10h-1zM93 159h1v6h-1zM94 150h1v10h-1zM95 144h1v7h-1zM96 142h1v3h-1zM97 142h1v1h-1zM98 142h1v1h-1zM99 141h1v1h-1zM100 141h1v1h-1zM101 141h1v1h-1zM102 141h1v1h-1zM103 141h1v1h-1zM104 140h1v2h-1zM105 140h1v1h-1zM106 140h1v1h-1zM107 140h1v1h-1zM108 140h1v1h-1zM109 140h1v1h-1zM110 139h1v1h-1zM111 139h1v1h-1zM112 139h1v1h-1zM113 139h1v1h-1zM114 139h1v1h-1zM115 138h1v2h-1zM116 138h1v1h-1zM117 138h1v1h-1zM118 138h1v1h-1zM119 138h1v1h-1zM120 138h1v1h-1zM121 137h1v2h-1zM122 137h1v1h-1zM123 137h1v1h-1zM124 137h1v1h-1zM125 137h1v1h-1zM126 136h1v2h-1zM127 136h1v1h-1zM128 136h1v1h-1zM129 136h1v1h-1zM130 136h1v1h-1zM131 136h1v1h-1zM132 135h1v2h-1zM133 135h1v1h-1zM134 135h1v1h-1zM135 135h1v1h-1zM136 135h1v1h-1zM137 134h1v2h-1zM138 134h1v1h-1zM139 134h1v1h-1zM140 134h1v1h-1zM141 134h1v1h-1zM142 134h1v1h-1zM143 133h1v2h-1zM144 133h1v1h-1zM145 133h1v1h-1zM146 133h1v1h-1zM147 133h1v1h-1zM148 133h1v1h-1zM149 132h1v2h-1zM150 132h1v1h-1zM151 132h1v1h-1zM152 132h1v1h-1zM153 132h1v1h-1zM154 131h1v2h-1zM155 131h1v1h-1zM156 131h1v1h-1zM157 131h1v1h-1zM158 131h1v1h-1zM159 131h1v1h-1zM160 130h1v2h-1zM161 130h1v1h-1zM162 130h1v1h-1zM163 130h1v1h-1zM164 130h1v1h-1zM165 130h1v1h-1zM166 129h1v2h-1zM167 129h1v1h-1zM168 129h1v1h-1zM169 129h1v1h-1zM170 129h1v1h-1zM171 129h1v1h-1zM172 128h1v2h-1zM173 128h1v1h-1zM174 128h1v1h-1zM175 128h1v1h-1zM176 128h1v1h-1zM177 128h1v1h-1zM178 127h1v1h-1zM179 127h1v1h-1zM180 127h1v1h-1zM181 127h1v1h-1zM182 127h1v1h-1zM183 127h1v1h-1zM184 126h1v1h-1zM185 126h1v1h-1zM186 126h1v1h-1zM187 126h1v1h-1zM188 126h1v1h-1zM189 126h1v1h-1zM190 125h1v1h-1zM191 125h1v1h-1zM192 125h1v1h-1zM193 125h1v1h-1zM194 125h1v1h-1zM195 124h1v2h-1zM196 124h1v1h-1zM197 124h1v1h-1zM198 124h1v1h-1zM199 124h1v1h-1zM200 124h1v1h-1zM201 123h1v2h-1zM202 123h1v1h-1zM203 123h1v1h-1zM204 123h1v1h-1zM205 123h1v1h-1zM206 123h1v1h-1zM207 123h1v1h-1zM208 122h1v2h-1zM209 122h1v1h-1zM210 122h1v1h-1zM211 122h1v1h-1zM212 122h1v1h-1zM213 122h1v1h-1zM214 121h1v2h-1zM215 121h1v1h-1zM216 121h1v1h-1zM217 121h1v1h-1zM218 121h1v1h-1zM219 121h1v1h-1zM220 120h1v2h-1zM221 120h1v1h-1zM222 120h1v1h-1zM223 120h1v1h-1zM224 120h1v1h-1zM225 120h1v1h-1zM226 120h1v1h-1zM227 119h1v2h-1zM228 119h1v1h-1zM229 119h1v1h-1zM230 119h1v1h-1zM231 119h1v1h-1zM232 119h1v1h-1zM233 118h1v2h-1zM234 118h1v1h-1zM235 118h1v1h-1zM236 118h1v1h-1zM237 118h1v1h-1zM238 118h1v1h-1zM239 118h1v1h-1zM240 117h1v2h-1zM241 117h1v1h-1zM242 117h1v1h-1zM243 117h1v1h-1zM244 117h1v1h-1zM245 117h1v1h-1zM246 116h1v2h-1zM247 116h1v1h-1zM248 116h1v1h-1zM249 116h1v1h-1zM250 116h1v1h-1zM251 116h1v1h-1zM252 115h1v2h-1zM253 115h1v1h-1zM254 115h1v1h-1zM255 115h1v1h-1zM256 115h1v1h-1zM257 115h1v1h-1zM258 114h1v2h-1zM259 114h1v1h-1zM260 114h1v1h-1zM261 114h1v1h-1zM262 114h1v1h-1zM263 114h1v1h-1zM264 113h1v2h-1zM265 113h1v1h-1zM266 113h1v1h-1zM267 113h1v1h-1zM268 113h1v1h-1zM269 113h1v1h-1zM270 112h1v2h-1zM271 112h1v1h-1zM272 112h1v1h-1zM273 112h1v1h-1zM274 112h1v1h-1zM275 112h1v1h-1zM276 111h1v2h-1zM277 111h1v1h-1zM278 111h1v1h-1zM279 111h1v1h-1zM280 111h1v1h-1zM281 111h1v1h-1zM282 111h1v1h-1zM283 110h1v1h-1zM284 110h1v1h-1zM285 110h1v1h-1zM286 110h1v1h-1zM287 110h1v1h-1zM288 110h1v1h-1zM289 110h1v1h-1zM290 109h1v2h-1zM291 109h1v1h-1zM292 109h1v1h-1zM293 109h1v1h-1zM294 109h1v1h-1zM295 109h1v1h-1zM296 109h1v1h-1zM297 109h1v1h-1zM298 108h1v2h-1zM299 108h1v1h-1zM300 108h1v1h-1zM301 108h1v1h-1zM302 108h1v1h-1zM303 108h1v1h-1zM304 108h1v1h-1zM305 108h1v1h-1zM306 107h1v2h-1zM307 107h1v1h-1zM308 107h1v1h-1zM309 107h1v1h-1zM310 107h1v1h-1zM311 107h1v1h-1zM312 107h1v1h-1zM313 106h1v2h-1zM314 106h1v1h-1zM315 106h1v1h-1zM316 106h1v1h-1zM317 106h1v1h-1zM318 106h1v1h-1zM319 106h1v1h-1zM320 106h1v1h-1zM321 106h1v1h-1zM322 106h1v1h-1zM323 106h1v1h-1zM324 106h1v17h-1zM325 122h1v14h-1zM326 135h1v6h-1zM327 122h1v14h-1zM328 105h1v18h-1zM329 105h1v1h-1zM330 104h1v2h-1zM331 104h1v1h-1zM332 104h1v1h-1zM333 104h1v1h-1zM334 104h1v1h-1zM335 104h1v1h-1zM336 103h1v2h-1zM337 103h1v1h-1zM338 103h1v1h-1zM339 103h1v1h-1zM340 103h1v1h-1zM341 103h1v1h-1zM342 103h1v1h-1zM343 102h1v2h-1zM344 102h1v1h-1zM345 102h1v1h-1zM346 102h1v1h-1zM347 102h1v1h-1zM348 102h1v1h-1zM349 102h1v1h-1zM350 102h1v1h-1zM351 101h1v2h-1zM352 101h1v1h-1zM353 101h1v1h-1zM354 101h1v1h-1zM355 101h1v1h-1zM356 101h1v1h-1zM357 101h1v1h-1zM358 100h1v2h-1zM359 100h1v1h-1zM360 100h1v1h-1zM361 100h1v1h-1zM362 100h1v1h-1zM363 100h1v1h-1zM364 100h1v1h-1zM365 100h1v1h-1zM366 99h1v2h-1zM367 99h1v1h-1zM368 99h1v1h-1zM369 99h1v1h-1zM370 99h1v1h-1zM371 99h1v1h-1zM372 99h1v1h-1zM373 98h1v2h-1zM374 98h1v1h-1zM375 98h1v1h-1zM376 98h1v1h-1zM377 98h1v1h-1zM378 98h1v1h-1zM379 98h1v1h-1zM380 98h1v1h-1zM381 97h1v1h-1zM382 97h1v1h-1zM383 97h1v1h-1zM384 97h1v1h-1zM385 97h1v1h-1zM386 97h1v1h-1zM387 97h1v1h-1zM388 96h1v2h-1zM389 96h1v1h-1zM390 96h1v1h-1zM391 96h1v1h-1zM392 96h1v1h-1zM393 96h1v1h-1zM394 96h1v1h-1zM395 95h1v2h-1zM396 95h1v1h-1zM397 95h1v1h-1zM398 95h1v1h-1zM399 95h1v1h-1zM400 95h1v1h-1zM401 95h1v1h-1zM402 95h1v1h-1zM403 94h1v2h-1zM404 94h1v1h-1zM405 94h1v1h-1zM406 94h1v1h-1zM407 94h1v1h-1zM408 94h1v1h-1zM409 94h1v1h-1zM410 93h1v2h-1zM411 93h1v1h-1zM412 93h1v1h-1zM413 93h1v1h-1zM414 93h1v1h-1zM415 93h1v1h-1zM416 93h1v1h-1zM417 93h1v1h-1zM418 92h1v2h-1zM419 92h1v1h-1zM420 92h1v1h-1zM421 92h1v1h-1zM422 92h1v1h-1zM423 92h1v1h-1zM424 92h1v1h-1zM425 92h1v1h-1zM426 91h1v2h-1zM427 91h1v1h-1zM428 91h1v1h-1zM429 91h1v1h-1zM430 91h1v1h-1zM431 91h1v1h-1zM432 91h1v1h-1zM433 91h1v1h-1zM434 91h1v1h-1zM435 91h1v1h-1zM436 91h1v1h-1zM437 91h1v1h-1zM438 91h1v1h-1zM439 91h1v1h-1zM440 90h1v2h-1zM441 90h1v1h-1zM442 90h1v1h-1zM443 90h1v1h-1zM444 90h1v1h-1zM445 90h1v1h-1zM446 90h1v1h-1zM447 90h1v1h-1zM448 90h1v1h-1zM449 90h1v1h-1zM450 90h1v1h-1zM451 90h1v1h-1zM452 90h1v1h-1zM453 90h1v1h-1zM454 89h1v2h-1zM455 89h1v1h-1zM456 89h1v1h-1zM457 89h1v1h-1zM458 89h1v1h-1zM459 88h1v2h-1zM460 88h1v1h-1zM461 88h1v1h-1zM462 88h1v1h-1zM463 88h1v1h-1zM464 87h1v2h-1zM465 87h1v1h-1zM466 87h1v1h-1zM467 87h1v1h-1zM468 87h1v1h-1zM469 87h1v1h-1zM470 87h1v1h-1zM471 87h1v1h-1zM472 87h1v1h-1zM473 87h1v1h-1zM474 86h1v2h-1zM475 86h1v1h-1zM476 86h1v1h-1zM477 86h1v1h-1zM478 86h1v1h-1zM479 86h1v1h-1zM480 86h1v1h-1zM481 86h1v1h-1zM482 86h1v1h-1zM483 86h1v1h-1zM484 86h1v1h-1zM485 86h1v1h-1zM486 86h1v1h-1zM487 86h1v1h-1zM488 85h1v2h-1zM489 85h1v1h-1zM490 85h1v1h-1zM491 85h1v1h-1zM492 85h1v1h-1zM493 85h1v1h-1zM494 84h1v2h-1zM495 84h1v1h-1zM496 84h1v2h-1zM497 85h1v1h-1zM498 85h1v12h-1zM499 96h1v21h-1zM500 116h1v22h-1zM501 137h1v12h-1zM502 116h1v22h-1zM503 93h1v24h-1zM504 82h1v12h-1zM505 82h1v1h-1zM506 82h1v1h-1zM507 82h1v1h-1zM508 82h1v1h-1zM509 82h1v1h-1zM510 82h1v1h-1zM511 82h1v1h-1zM512 82h1v1h-1zM513 82h1v1h-1zM514 82h1v1h-1zM515 82h1v1h-1zM516 82h1v1h-1zM517 82h1v1h-1zM518 82h1v1h-1zM519 82h1v1h-1zM520 82h1v1h-1zM521 82h1v1h-1z" fill="#dcdcdc"/>
<path d="M62 301h1v9h-1zM63 301h1v2h-1zM64 301h1v2h-1zM65 302h1v2h-1zM66 303h1v3h-1zM67 304h1v1h-1zM68 305h1v1h-1zM69 305h1v3h-1zM70 306h1v3h-1zM71 307h1v1h-1zM72 307h1v2h-1zM73 307h1v2h-1zM74 307h1v1h-1zM75 307h1v1h-1zM76 307h1v2h-1zM77 307h1v2h-1zM78 307h1v1h-1zM79 307h1v1h-1zM80 307h1v2h-1zM81 307h1v1h-1zM82 307h1v1h-1zM83 307h1v2h-1zM84 307h1v2h-1zM85 307h1v1h-1zM86 307h1v1h-1zM87 307h1v2h-1zM88 307h1v1h-1zM89 307h1v1h-1zM90 307h1v2h-1zM91 307h1v2h-1zM92 306h1v3h-1zM93 305h1v2h-1zM94 304h1v3h-1zM95 304h1v2h-1zM96 305h1v1h-1zM97 305h1v3h-1zM98 306h1v3h-1zM99 307h1v1h-1zM100 307h1v2h-1zM101 307h1v2h-1zM102 307h1v1h-1zM103 307h1v1h-1zM104 307h1v2h-1zM105 307h1v2h-1zM106 307h1v1h-1zM107 307h1v1h-1zM108 307h1v2h-1zM109 307h1v1h-1zM110 307h1v1h-1zM111 307h1v2h-1zM112 306h1v3h-1zM113 306h1v1h-1zM114 305h1v2h-1zM115 305h1v2h-1zM116 304h1v2h-1zM117 303h1v2h-1zM118 303h1v2h-1zM119 302h1v3h-1zM120 303h1v2h-1zM121 304h1v2h-1zM122 305h1v3h-1zM123 306h1v2h-1zM124 307h1v2h-1zM125 307h1v2h-1zM126 307h1v2h-1zM127 307h1v1h-1zM128 307h1v1h-1zM129 307h1v2h-1zM130 307h1v1h-1zM131 307h1v1h-1zM132 306h1v3h-1zM133 305h1v2h-1zM134 305h1v1h-1zM135 305h1v2h-1zM136 306h1v2h-1zM137 306h1v2h-1zM138 305h1v2h-1zM139 305h1v2h-1zM140 304h1v2h-1zM141 303h1v2h-1zM142 301h1v2h-1zM143 301h1v2h-1zM144 301h1v2h-1zM145 302h1v1h-1zM146 302h1v3h-1zM147 302h1v2h-1zM148 302h1v1h-1zM149 303h1v1h-1zM150 304h1v2h-1zM151 305h1v1h-1zM152 306h1v1h-1zM153 306h1v3h-1zM154 307h1v2h-1zM155 307h1v2h-1zM156 307h1v1h-1zM157 306h1v2h-1zM158 306h1v1h-1zM159 305h1v1h-1zM160 305h1v2h-1zM161 306h1v2h-1zM162 306h1v1h-1zM163 307h1v1h-1zM164 307h1v2h-1zM165 307h1v2h-1zM166 307h1v1h-1zM167 307h1v2h-1zM168 307h1v2h-1zM169 307h1v1h-1zM170 307h1v1h-1zM171 307h1v2h-1zM172 307h1v1h-1zM173 307h1v1h-1zM174 307h1v2h-1zM175 307h1v2h-1zM176 307h1v1h-1zM177 307h1v1h-1zM178 307h1v2h-1zM179 307h1v1h-1zM180 307h1v1h-1zM181 307h1v2h-1zM182 307h1v2h-1zM183 307h1v1h-1zM184 307h1v1h-1zM185 307h1v2h-1zM186 307h1v1h-1zM187 307h1v1h-1zM188 307h1v2h-1zM189 307h1v2h-1zM190 307h1v1h-1zM191 307h1v1h-1zM192 307h1v2h-1zM193 307h1v1h-1zM194 307h1v1h-1zM195 306h1v2h-1zM196 306h1v2h-1zM197 306h1v1h-1zM198 304h1v3h-1zM199 304h1v3h-1zM200 305h1v2h-1zM201 306h1v2h-1zM202 307h1v2h-1zM203 307h1v3h-1zM204 307h1v1h-1zM205 306h1v2h-1zM206 306h1v2h-1zM207 306h1v1h-1zM208 306h1v1h-1zM209 306h1v2h-1zM210 306h1v2h-1zM211 304h1v4h-1zM212 302h1v3h-1zM213 300h1v4h-1zM214 299h1v2h-1zM215 299h1v2h-1zM216 300h1v2h-1zM217 300h1v3h-1zM218 301h1v2h-1zM219 302h1v2h-1zM220 304h1v2h-1zM221 304h1v2h-1zM222 305h1v1h-1zM223 306h1v2h-1zM224 306h1v3h-1zM225 307h1v1h-1zM226 307h1v2h-1zM227 306h1v2h-1zM228 305h1v1h-1zM229 302h1v4h-1zM230 300h1v4h-1zM231 300h1v2h-1zM232 301h1v1h-1zM233 301h1v1h-1zM234 302h1v2h-1zM235 302h1v1h-1zM236 301h1v2h-1zM237 301h1v2h-1zM238 301h1v2h-1zM239 301h1v1h-1zM240 302h1v1h-1zM241 302h1v2h-1zM242 301h1v2h-1zM243 301h1v1h-1zM244 300h1v3h-1zM245 300h1v2h-1zM246 300h1v2h-1zM247 301h1v1h-1zM248 301h1v2h-1zM249 301h1v1h-1zM250 301h1v2h-1zM251 301h1v2h-1zM252 300h1v3h-1zM253 300h1v1h-1zM254 300h1v2h-1zM255 302h1v3h-1zM256 302h1v2h-1zM257 301h1v2h-1zM258 301h1v2h-1zM259 301h1v2h-1zM260 301h1v1h-1zM261 301h1v1h-1zM262 301h1v2h-1zM263 301h1v1h-1zM264 301h1v1h-1zM265 301h1v2h-1zM266 301h1v2h-1zM267 301h1v1h-1zM268 301h1v2h-1zM269 300h1v3h-1zM270 299h1v2h-1zM271 299h1v2h-1zM272 300h1v4h-1zM273 302h1v3h-1zM274 303h1v2h-1zM275 304h1v2h-1zM276 303h1v3h-1zM277 302h1v2h-1zM278 301h1v2h-1zM279 300h1v3h-1zM280 299h1v3h-1zM281 299h1v2h-1zM282 300h1v2h-1zM283 301h1v3h-1zM284 302h1v2h-1zM285 301h1v2h-1zM286 301h1v2h-1zM287 301h1v2h-1zM288 301h1v1h-1zM289 301h1v1h-1zM290 301h1v2h-1zM291 301h1v2h-1zM292 302h1v2h-1zM293 302h1v3h-1zM294 301h1v3h-1zM295 300h1v2h-1zM296 300h1v1h-1zM297 299h1v3h-1zM298 299h1v1h-1zM299 299h1v1h-1zM300 299h1v3h-1zM301 300h1v3h-1zM302 301h1v2h-1zM303 302h1v2h-1zM304 301h1v2h-1zM305 300h1v1h-1zM306 300h1v1h-1zM307 300h1v2h-1zM308 301h1v2h-1zM309 300h1v2h-1zM310 298h1v2h-1zM311 298h1v2h-1zM312 299h1v1h-1zM313 299h1v1h-1zM314 298h1v4h-1zM315 297h1v3h-1zM316 296h1v2h-1zM317 296h1v1h-1zM318 295h1v3h-1zM319 295h1v2h-1zM320 296h1v2h-1zM321 297h1v3h-1zM322 299h1v3h-1zM323 300h1v2h-1zM324 300h1v2h-1zM325 298h1v3h-1zM326 298h1v2h-1zM327 299h1v2h-1zM328 292h1v11h-1zM329 292h1v4h-1zM330 294h1v3h-1zM331 295h1v2h-1zM332 294h1v3h-1zM333 294h1v1h-1zM334 293h1v2h-1zM335 293h1v2h-1zM336 293h1v2h-1zM337 291h1v3h-1zM338 290h1v2h-1zM339 290h1v3h-1zM340 291h1v3h-1zM341 293h1v2h-1zM342 295h1v3h-1zM343 296h1v3h-1zM344 297h1v2h-1zM345 296h1v4h-1zM346 294h1v4h-1zM347 292h1v3h-1zM348 292h1v3h-1zM349 294h1v3h-1zM350 295h1v3h-1zM351 295h1v1h-1zM352 294h1v1h-1zM353 294h1v2h-1zM354 294h1v2h-1zM355 295h1v1h-1zM356 294h1v3h-1zM357 293h1v3h-1zM358 293h1v1h-1zM359 291h1v3h-1zM360 290h1v3h-1zM361 289h1v2h-1zM362 288h1v2h-1zM363 288h1v2h-1zM364 288h1v3h-1zM365 290h1v4h-1zM366 294h1v3h-1zM367 293h1v4h-1zM368 292h1v2h-1zM369 291h1v2h-1zM370 290h1v3h-1zM371 290h1v2h-1zM372 290h1v2h-1zM373 291h1v2h-1zM374 292h1v3h-1zM375 294h1v1h-1zM376 295h1v1h-1zM377 296h1v2h-1zM378 297h1v3h-1zM379 298h1v2h-1zM380 298h1v2h-1zM381 298h1v2h-1zM382 297h1v2h-1zM383 292h1v6h-1zM384 290h1v4h-1zM385 291h1v4h-1zM386 294h1v1h-1zM387 294h1v1h-1zM388 294h1v2h-1zM389 294h1v1h-1zM390 294h1v1h-1zM391 294h1v2h-1zM392 294h1v2h-1zM393 294h1v1h-1zM394 293h1v2h-1zM395 293h1v2h-1zM396 293h1v1h-1zM397 293h1v1h-1zM398 293h1v3h-1zM399 294h1v2h-1zM400 295h1v1h-1zM401 295h1v1h-1zM402 295h1v2h-1zM403 295h1v1h-1zM404 294h1v2h-1zM405 294h1v2h-1zM406 294h1v2h-1zM407 294h1v1h-1zM408 294h1v1h-1zM409 293h1v3h-1zM410 292h1v1h-1zM411 291h1v2h-1zM412 292h1v4h-1zM413 295h1v3h-1zM414 296h1v2h-1zM415 297h1v2h-1zM416 296h1v5h-1zM417 294h1v3h-1zM418 292h1v3h-1zM419 290h1v4h-1zM420 290h1v2h-1zM421 290h1v1h-1zM422 290h1v4h-1zM423 294h1v4h-1zM424 295h1v1h-1zM425 294h1v2h-1zM426 294h1v4h-1zM427 296h1v3h-1zM428 295h1v4h-1zM429 293h1v3h-1zM430 291h1v4h-1zM431 291h1v2h-1zM432 292h1v2h-1zM433 293h1v2h-1zM434 293h1v3h-1zM435 293h1v1h-1zM436 292h1v1h-1zM437 292h1v3h-1zM438 293h1v3h-1zM439 295h1v2h-1zM440 294h1v3h-1zM441 292h1v4h-1zM442 291h1v2h-1zM443 291h1v2h-1zM444 292h1v2h-1zM445 292h1v2h-1zM446 288h1v6h-1zM447 285h1v5h-1zM448 287h1v6h-1zM449 291h1v4h-1zM450 291h1v3h-1zM451 290h1v3h-1zM452 290h1v1h-1zM453 291h1v1h-1zM454 292h1v2h-1zM455 292h1v3h-1zM456 291h1v2h-1zM457 291h1v1h-1zM458 289h1v4h-1zM459 287h1v3h-1zM460 286h1v2h-1zM461 286h1v3h-1zM462 287h1v4h-1zM463 289h1v1h-1zM464 288h1v1h-1zM465 288h1v4h-1zM466 290h1v3h-1zM467 292h1v3h-1zM468 294h1v3h-1zM469 293h1v2h-1zM470 292h1v1h-1zM471 290h1v3h-1zM472 289h1v3h-1zM473 288h1v2h-1zM474 288h1v2h-1zM475 289h1v3h-1zM476 288h1v5h-1zM477 286h1v3h-1zM478 286h1v1h-1zM479 287h1v2h-1zM480 288h1v1h-1zM481 288h1v2h-1zM482 288h1v2h-1zM483 288h1v2h-1zM484 288h1v1h-1zM485 288h1v1h-1zM486 288h1v2h-1zM487 288h1v1h-1zM488 288h1v1h-1zM489 287h1v3h-1zM490 286h1v3h-1zM491 285h1v2h-1zM492 285h1v1h-1zM493 285h1v2h-1zM494 285h1v1h-1zM495 283h1v3h-1zM496 281h1v4h-1zM497 280h1v3h-1zM498 280h1v2h-1zM499 281h1v4h-1zM500 284h1v4h-1zM501 286h1v4h-1zM502 289h1v3h-1zM503 291h1v4h-1zM504 293h1v4h-1zM505 294h1v1h-1zM506 293h1v2h-1zM507 293h1v2h-1zM508 293h1v2h-1zM509 294h1v1h-1zM510 294h1v2h-1zM511 293h1v2h-1zM512 293h1v1h-1zM513 293h1v1h-1zM514 293h1v3h-1zM515 294h1v2h-1zM516 293h1v3h-1zM517 290h1v5h-1zM518 289h1v3h-1zM519 288h1v2h-1zM520 288h1v1h-1zM521 288h1v2h-1zM522 289h1v1h-1zM523 290h1v2h-1zM524 291h1v4h-1zM525 293h1v2h-1zM526 293h1v1h-1zM527 294h1v1h-1z" fill="#ff00ff"/>
<rect x="528" y="73" width="1" height="132" fill="#e0e0e0"/>
<rect x="528" y="223" width="1" height="132" fill="#e0e0e0"/>
</svg>
<svg width="0" height="0" style="position:absolute"><filter id="cr" x="0" y="0" width="100%" height="100%" color-interpolation-filters="sRGB"><feComponentTransfer><feFuncA type="linear" slope="3" intercept="-0.55"/></feComponentTransfer></filter></svg>
<div id="txt" style="left:0;top:0;width:743px;height:449px;filter:url(#cr)">
<span class="t b" style="left:6.48px;top:9px;"><span class="w" style="transform:scaleX(1.042);margin-right:2.99px;">CD </span><span class="w" style="transform:scaleX(1.122);margin-right:4.56px;">Speed </span><span class="w" style="transform:scaleX(1.314);margin-right:2.62px;">: </span><span class="w" style="transform:scaleX(1.039);margin-right:3.44px;">Disc </span><span class="w" style="transform:scaleX(1.110);margin-right:8.44px;">Quality </span><span class="w" style="transform:scaleX(1.171);margin-right:5.96px;">Test </span><span class="w" style="transform:scaleX(2.433);margin-right:7.23px;">- </span><span class="w" style="transform:scaleX(0.994);margin-right:17.82px;">BENQ </span><span class="w" style="transform:scaleX(0.948);margin-right:3.51px;">DVD </span><span class="w" style="transform:scaleX(0.972);margin-right:1.94px;">DD </span><span class="w" style="transform:scaleX(1.090);margin-right:22.27px;">DW1620 </span><span class="w" style="transform:scaleX(1.090);">B7V9</span></span>
<span class="t" style="left:21.53px;top:38px;transform:scaleX(0.971);">Disc Quality</span>
<span class="t" style="left:277.00px;top:57px;"><span class="w" style="transform:scaleX(0.937);margin-right:5.76px;">recorded with _NEC </span><span class="w" style="transform:scaleX(0.924);margin-right:-2.30px;">DVD_RW ND-4550A </span><span class="w" style="transform:scaleX(0.872);">v1.26</span></span>
<span class="t" style="left:42.24px;top:66px;transform:scaleX(0.928);">50</span>
<span class="t" style="left:42.47px;top:93px;transform:scaleX(0.910);">40</span>
<span class="t" style="left:42.24px;top:119px;transform:scaleX(0.928);">30</span>
<span class="t" style="left:42.24px;top:145px;transform:scaleX(0.928);">20</span>
<span class="t" style="left:41.73px;top:171px;transform:scaleX(0.967);">10</span>
<span class="t" style="left:532.68px;top:78px;transform:scaleX(0.886);">48</span>
<span class="t" style="left:532.68px;top:98px;transform:scaleX(0.886);">40</span>
<span class="t" style="left:532.44px;top:118px;transform:scaleX(0.922);">32</span>
<span class="t" style="left:532.45px;top:138px;transform:scaleX(0.904);">24</span>
<span class="t" style="left:531.96px;top:158px;transform:scaleX(0.942);">16</span>
<span class="t" style="left:532.42px;top:178px;transform:scaleX(0.957);">8</span>
<span class="t" style="left:64.21px;top:206px;transform:scaleX(0.974);">0</span>
<span class="t" style="left:116.89px;top:206px;transform:scaleX(0.967);">10</span>
<span class="t" style="left:175.75px;top:206px;transform:scaleX(0.928);">20</span>
<span class="t" style="left:234.10px;top:206px;transform:scaleX(0.928);">30</span>
<span class="t" style="left:292.69px;top:206px;transform:scaleX(0.910);">40</span>
<span class="t" style="left:350.81px;top:206px;transform:scaleX(0.928);">50</span>
<span class="t" style="left:409.17px;top:206px;transform:scaleX(0.928);">60</span>
<span class="t" style="left:467.52px;top:206px;transform:scaleX(0.928);">70</span>
<span class="t" style="left:526.13px;top:206px;transform:scaleX(0.936);">80</span>
<span class="t" style="left:64.21px;top:356px;transform:scaleX(0.974);">0</span>
<span class="t" style="left:116.89px;top:356px;transform:scaleX(0.967);">10</span>
<span class="t" style="left:175.75px;top:356px;transform:scaleX(0.928);">20</span>
<span class="t" style="left:234.10px;top:356px;transform:scaleX(0.928);">30</span>
<span class="t" style="left:292.69px;top:356px;transform:scaleX(0.910);">40</span>
<span class="t" style="left:350.81px;top:356px;transform:scaleX(0.928);">50</span>
<span class="t" style="left:409.17px;top:356px;transform:scaleX(0.928);">60</span>
<span class="t" style="left:467.52px;top:356px;transform:scaleX(0.928);">70</span>
<span class="t" style="left:526.13px;top:356px;transform:scaleX(0.936);">80</span>
<span class="t" style="left:41.73px;top:216px;transform:scaleX(0.967);">10</span>
<span class="t" style="left:48.11px;top:243px;transform:scaleX(0.974);">8</span>
<span class="t" style="left:48.11px;top:269px;transform:scaleX(0.974);">6</span>
<span class="t" style="left:48.37px;top:295px;transform:scaleX(0.933);">4</span>
<span class="t" style="left:48.09px;top:321px;transform:scaleX(1.018);">2</span>
<span class="t" style="left:532.55px;top:216px;transform:scaleX(0.904);">20</span>
<span class="t" style="left:532.06px;top:243px;transform:scaleX(0.942);">16</span>
<span class="t" style="left:532.04px;top:269px;transform:scaleX(0.962);">12</span>
<span class="t" style="left:532.51px;top:295px;transform:scaleX(0.974);">8</span>
<span class="t" style="left:532.77px;top:321px;transform:scaleX(0.933);">4</span>
<span class="t" style="left:39.14px;top:367px;"><span class="w" style="transform:scaleX(0.911);margin-right:-2.51px;">CD</span><span class="w" style="transform:scaleX(0.815);">エラー</span></span>
<span class="t" style="left:219.22px;top:367px;"><span class="w" style="transform:scaleX(0.968);margin-right:-1.26px;">C2</span><span class="w" style="transform:scaleX(0.800);">エラー</span></span>
<span class="t" style="left:401.04px;top:367px;transform:scaleX(1.047);">Jitter</span>
<span class="t" style="left:26.30px;top:382px;transform:scaleX(0.994);">平均:</span>
<span class="t" style="left:26.05px;top:400px;transform:scaleX(1.004);">最大:</span>
<span class="t" style="left:26.02px;top:418px;transform:scaleX(1.043);">合計 :</span>
<span class="t" style="left:208.30px;top:382px;transform:scaleX(0.994);">平均:</span>
<span class="t" style="left:208.05px;top:400px;transform:scaleX(1.004);">最大:</span>
<span class="t" style="left:208.02px;top:418px;transform:scaleX(1.043);">合計 :</span>
<span class="t" style="left:388.00px;top:382px;transform:scaleX(0.994);">平均:</span>
<span class="t" style="left:387.75px;top:400px;transform:scaleX(1.004);">最大:</span>
<span class="t" style="left:155.09px;top:382px;transform:scaleX(0.822);color:#0000a8;">2.31</span>
<span class="t" style="left:162.78px;top:400px;transform:scaleX(0.880);color:#0000a8;">49</span>
<span class="t" style="left:145.26px;top:418px;transform:scaleX(0.935);color:#0000a8;">11083</span>
<span class="t" style="left:337.16px;top:382px;transform:scaleX(0.871);color:#0000a8;">0.00</span>
<span class="t" style="left:351.11px;top:400px;transform:scaleX(0.974);color:#0000a8;">0</span>
<span class="t" style="left:351.11px;top:418px;transform:scaleX(0.974);color:#0000a8;">0</span>
<span class="t" style="left:507.57px;top:382px;transform:scaleX(0.855);color:#0000a8;">8.28 %</span>
<span class="t" style="left:507.11px;top:400px;transform:scaleX(0.891);color:#0000a8;">11.3 %</span>
<span class="t" style="left:582.10px;top:61px;transform:scaleX(1.043);">開始</span>
<span class="t" style="left:667.49px;top:61px;"><span class="w" style="transform:scaleX(1.025);margin-right:0.83px;">終了</span><span class="w" style="transform:scaleX(0.910);top:-1px;">(<u>X</u>)</span></span>
<span class="t" style="left:569.03px;top:81px;color:#0040e0;"><span class="w" style="transform:scaleX(0.771);margin-right:-12.01px;">ディスク</span><span class="w" style="transform:scaleX(0.957);">情報</span></span>
<span class="t" style="left:567.57px;top:95px;transform:scaleX(0.751);">タイプ:</span>
<span class="t" style="left:567.73px;top:109px;transform:scaleX(0.966);">ID:</span>
<span class="t" style="left:566.30px;top:125px;transform:scaleX(1.067);">日付:</span>
<span class="t" style="left:567.76px;top:139px;transform:scaleX(0.943);">Label:</span>
<span class="t" style="left:616.64px;top:94px;transform:scaleX(0.955);color:#0000a8;">Data CD</span>
<span class="t" style="left:616.95px;top:109px;transform:scaleX(0.952);color:#0000a8;">Ritek</span>
<span class="t" style="left:616.07px;top:124px;transform:scaleX(0.933);color:#0000a8;">10 September 2005</span>
<span class="t" style="left:616.87px;top:139px;transform:scaleX(0.867);color:#0000a8;">CDS_TEST_A2</span>
<span class="t" style="left:569.52px;top:154px;transform:scaleX(0.965);color:#0040e0;">Settings</span>
<span class="t" style="left:567.88px;top:173px;transform:scaleX(1.039);">転送速度</span>
<span class="t" style="left:567.39px;top:199px;transform:scaleX(1.047);">開始</span>
<span class="t" style="left:568.20px;top:221px;transform:scaleX(1.006);">終了位置</span>
<span class="t" style="left:633.58px;top:173px;transform:scaleX(1.021);">16 X</span>
<span class="t" style="left:633.37px;top:196px;transform:scaleX(0.863);">00:00.00</span>
<span class="t" style="left:633.37px;top:219px;transform:scaleX(0.863);">79:57.68</span>
<span class="t" style="left:584.32px;top:242px;transform:scaleX(0.953);">Quick Scan</span>
<span class="t" style="left:584.32px;top:261px;transform:scaleX(0.956);">Show C1/PIE</span>
<span class="t" style="left:584.32px;top:276px;transform:scaleX(0.966);">Show C2/PIF</span>
<span class="t" style="left:584.31px;top:291px;transform:scaleX(0.987);">Show Jitter</span>
<span class="t" style="left:584.34px;top:306px;transform:scaleX(0.922);">Show Read Speed</span>
<span class="t" style="left:584.34px;top:321px;transform:scaleX(0.929);">Show Write Speed</span>
<span class="t" style="left:567.61px;top:349px;"><span class="w" style="transform:scaleX(1.032);margin-right:-0.04px;">品質</span><span class="w" style="transform:scaleX(0.746);margin-right:-10.87px;">スコア</span><span class="w" style="transform:scaleX(1.600);">:</span></span>
<span class="t" style="left:694.03px;top:350px;transform:scaleX(0.939);color:#0000a8;">92</span>
<span class="t" style="left:568.15px;top:381px;transform:scaleX(1.000);">進行状況:</span>
<span class="t" style="left:567.95px;top:400px;transform:scaleX(0.759);">ポジション:</span>
<span class="t" style="left:568.15px;top:419px;transform:scaleX(1.004);">速度:</span>
<span class="t" style="left:677.63px;top:381px;transform:scaleX(0.870);color:#0000a8;">100 %</span>
<span class="t" style="left:666.57px;top:400px;transform:scaleX(0.859);color:#0000a8;">79:55.00</span>
<span class="t" style="left:669.58px;top:419px;transform:scaleX(0.925);color:#0000a8;">18.08 X</span>

</div>
</div>
</body></html>
